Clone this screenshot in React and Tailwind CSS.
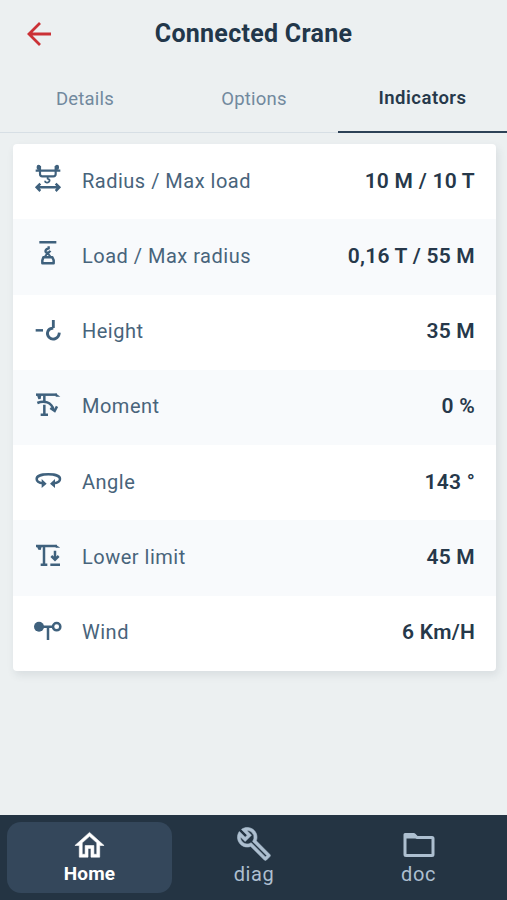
import { MdOutlineHome, MdOutlineBuild } from 'react-icons/md';

// Crane glyphs share one 84x108 box, drawn at 28x36
function Glyph({ children }) {
  return (
    <svg
      viewBox="42 30 84 108"
      className="w-7 h-9 shrink-0 overflow-visible"
      fill="none"
      stroke="#3f617d"
      strokeWidth="7.5"
    >
      {children}
    </svg>
  );
}

const GLYPHS = {
  radius: (
    <>
      <path d="M47 62h74M60 48v24q0 7 7 7h33q7 0 7-7V48" strokeWidth="6.5" />
      <path d="M56 50v4M111 50v4" strokeWidth="12" strokeLinecap="round" />
      <path d="M83 79v7q8 3 5 8c-3 6-13 5-13-2" strokeWidth="5.5" />
      <path d="M52 112h64M61 101l-11 11 11 11M107 101l11 11-11 11" />
    </>
  ),
  load: (
    <>
      <path d="M58 52h51" />
      <path d="M86 64v6c-12 3-12 13-4 13q6 0 9-6" strokeWidth="7" />
      <path d="M83 84l-9 12M83 84l9 12" strokeWidth="6" />
      <path d="M70 97h27l4 9v9H67v-9z" strokeWidth="7.5" strokeLinejoin="round" />
    </>
  ),
  height: (
    <>
      <path d="M47 88h22" />
      <path d="M100 57v24M100 81c-18 1-22 18-13 28 11 11 30 4 31-14" strokeWidth="8.5" />
    </>
  ),
  moment: (
    <>
      <path d="M48 56h63" />
      <path d="M107 52l14 10h-14z" fill="#3f617d" stroke="none" />
      <path d="M51 58h13l-2 11-7 1z" fill="#3f617d" stroke="none" />
      <path d="M73 58v17M73 86v29M62 116h22" />
      <path d="M52 81c20-9 43-3 49 21" />
      <path d="M91 96l13 9 7-14" />
    </>
  ),
  angle: (
    <>
      <path d="M70 97c-12-1-20-6-20-13 0-9 16-14 35-14s35 5 35 14c0 7-8 12-20 13" />
      <path d="M65 84l15 14-15 13zM105 84L90 98l15 13z" fill="#3f617d" stroke="none" />
    </>
  ),
  lower: (
    <>
      <path d="M48 60h63" />
      <path d="M107 56l14 9h-14z" fill="#3f617d" stroke="none" />
      <path d="M51 62h14l-3 10-7-1z" fill="#3f617d" stroke="none" />
      <path d="M72 62v53M62 116h20M91 116h29" />
      <path d="M105 74v26M94 90l11 11 11-11" />
    </>
  ),
  wind: (
    <>
      <circle cx="57" cy="74" r="15" fill="#3f617d" stroke="none" />
      <circle cx="110" cy="74" r="11" />
      <path d="M68 74h31M84 74v40" />
    </>
  ),
};

const ROWS = [
  { icon: 'radius', label: 'Radius / Max load', value: '10 M / 10 T' },
  { icon: 'load', label: 'Load / Max radius', value: '0,16 T / 55 M' },
  { icon: 'height', label: 'Height', value: '35 M' },
  { icon: 'moment', label: 'Moment', value: '0 %' },
  { icon: 'angle', label: 'Angle', value: '143 °' },
  { icon: 'lower', label: 'Lower limit', value: '45 M' },
  { icon: 'wind', label: 'Wind', value: '6 Km/H' },
];

function Header() {
  return (
    <header className="grid grid-cols-[1fr_auto_1fr] items-center h-[67px]">
      <svg viewBox="0 0 26 26" className="w-[26px] h-[26px] ml-[26px] mt-px" fill="none" stroke="#cb3136" strokeWidth="2.8">
        <path d="M25 13H3M14 2L3 13l11 11" />
      </svg>
      <h1 className="text-[25px] leading-8 font-bold tracking-[0.28px] text-[#22374a]">Connected Crane</h1>
    </header>
  );
}

function Tabs() {
  return (
    <nav className="grid grid-cols-3 h-[66px] text-center text-[18.5px] leading-6 text-[#71899e]">
      <div className="pt-5 pl-px border-b border-[#d7dfe5] tracking-[0.2px]">Details</div>
      <div className="pt-5 pl-px border-b border-[#d7dfe5] tracking-[0.2px]">Options</div>
      <div className="pt-[19px] border-b-2 border-[#2d4257] font-semibold tracking-[0.5px] text-[#26394b]">Indicators</div>
    </nav>
  );
}

function BottomBar() {
  return (
    <footer className="flex h-[85px] pt-[7px] pl-[7px] bg-[#243443] text-[20px] leading-6 text-[#adbfd0]">
      <div className="flex flex-col items-center w-[165px] h-[71px] pt-1.5 rounded-[14px] bg-[#34475b] text-white font-bold">
        <MdOutlineHome className="w-[35px] h-[35px] [&>path]:stroke-current [&>path]:[stroke-width:0.4] [&>path[fill=none]]:stroke-none" />
        <span className="-mt-px text-[19px] tracking-[0.1px]">Home</span>
      </div>
      <div className="flex flex-col items-center w-[164px] pt-1">
        <MdOutlineBuild className="w-9 h-9 [&>path]:stroke-current [&>path]:[stroke-width:0.4] [&>path[fill=none]]:stroke-none" />
        <span className="tracking-[0.6px]">diag</span>
      </div>
      <div className="flex flex-col items-center w-[165px] pt-[5px]">
        <svg viewBox="0 0 36 36" className="w-9 h-9" fill="none" stroke="currentColor" strokeWidth="3">
          <path d="M4 7.500h9l3 3h15a1 1 0 0 1 1 1v16a1 1 0 0 1-1 1H5a1 1 0 0 1-1-1z" strokeLinejoin="round" />
          <path d="M4 8h9.500l2 2.500H4z" fill="currentColor" strokeWidth="2" />
        </svg>
        <span className="-mt-px tracking-[0.6px]">doc</span>
      </div>
    </footer>
  );
}

export default function App() {
  return (
    <div className="flex flex-col w-[507px] h-[900px] overflow-hidden bg-[#ecf0f1] font-['Roboto',sans-serif]">
      <Header />
      <Tabs />

      <main className="flex-1 pt-[11px] pl-[13px] pr-[11px]">
        <div className="rounded-[4px] overflow-hidden bg-white shadow-[2px_4px_8px_rgba(40,60,80,0.1)]">
          {ROWS.map(row => (
            <div key={row.icon} className="flex items-start h-[75.3px] pt-4 pl-[21px] pr-[21px] even:bg-[#f8fafc]">
              <Glyph>{GLYPHS[row.icon]}</Glyph>
              <span className="ml-5 mt-[4.6px] text-[20px] leading-8 tracking-[0.5px] text-[#48647b]">{row.label}</span>
              <span className="ml-auto mt-[4.6px] text-[21px] leading-8 font-semibold tracking-[0.25px] text-[#26384a]">{row.value}</span>
            </div>
          ))}
        </div>
      </main>

      <BottomBar />
    </div>
  );
}
